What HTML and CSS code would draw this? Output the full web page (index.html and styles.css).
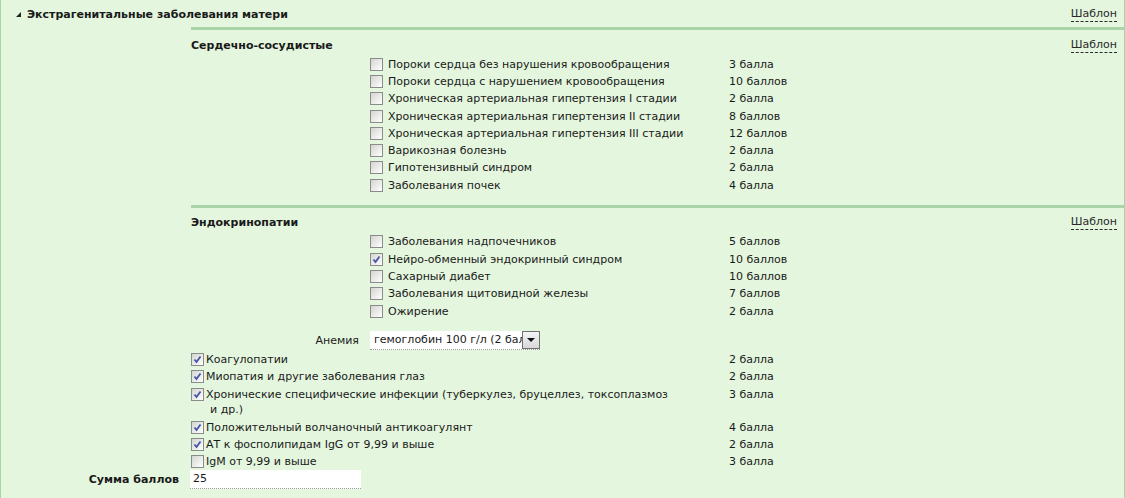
FILE: index.html
```html
<!DOCTYPE html>
<html lang="ru">
<head>
<meta charset="utf-8">
<title>Экстрагенитальные заболевания матери</title>
<link rel="stylesheet" href="styles.css">
</head>
<body>
<div class="panel">
  <div class="panel-head">
    <span class="tri"></span>
    <span class="panel-title">Экстрагенитальные заболевания матери</span>
    <a class="tpl">Шаблон</a>
  </div>

  <section class="group group-first">
    <div class="group-head"><span class="group-title">Сердечно-сосудистые</span><a class="tpl">Шаблон</a></div>
    <ul class="items">
      <li><span class="cb"></span><span class="lbl">Пороки сердца без нарушения кровообращения</span><span class="pts">3 балла</span></li>
      <li><span class="cb"></span><span class="lbl">Пороки сердца с нарушением кровообращения</span><span class="pts">10 баллов</span></li>
      <li><span class="cb"></span><span class="lbl">Хроническая артериальная гипертензия I стадии</span><span class="pts">2 балла</span></li>
      <li><span class="cb"></span><span class="lbl">Хроническая артериальная гипертензия II стадии</span><span class="pts">8 баллов</span></li>
      <li><span class="cb"></span><span class="lbl">Хроническая артериальная гипертензия III стадии</span><span class="pts">12 баллов</span></li>
      <li><span class="cb"></span><span class="lbl">Варикозная болезнь</span><span class="pts">2 балла</span></li>
      <li><span class="cb"></span><span class="lbl">Гипотензивный синдром</span><span class="pts">2 балла</span></li>
      <li><span class="cb"></span><span class="lbl">Заболевания почек</span><span class="pts">4 балла</span></li>
    </ul>
  </section>

  <section class="group group-second">
    <div class="group-head"><span class="group-title">Эндокринопатии</span><a class="tpl">Шаблон</a></div>
    <ul class="items">
      <li><span class="cb"></span><span class="lbl">Заболевания надпочечников</span><span class="pts">5 баллов</span></li>
      <li><span class="cb checked"><svg viewBox="0 0 11 11" width="11" height="11"><path d="M2.5 5.5 L4.5 8 L8.5 2.5" fill="none" stroke="#4455aa" stroke-width="1.8"/></svg></span><span class="lbl">Нейро-обменный эндокринный синдром</span><span class="pts">10 баллов</span></li>
      <li><span class="cb"></span><span class="lbl">Сахарный диабет</span><span class="pts">10 баллов</span></li>
      <li><span class="cb"></span><span class="lbl">Заболевания щитовидной железы</span><span class="pts">7 баллов</span></li>
      <li><span class="cb"></span><span class="lbl">Ожирение</span><span class="pts">2 балла</span></li>
    </ul>
  </section>

  <div class="anemia-row">
    <span class="field-label">Анемия</span>
    <div class="select">
      <span class="select-text">гемоглобин 100 г/л (2 балла)</span>
      <span class="select-btn"><span class="arrow"></span></span>
    </div>
  </div>

  <ul class="items-wide">
    <li><span class="cb checked"><svg viewBox="0 0 11 11" width="11" height="11"><path d="M2.5 5.5 L4.5 8 L8.5 2.5" fill="none" stroke="#4455aa" stroke-width="1.8"/></svg></span><span class="lbl">Коагулопатии</span><span class="pts">2 балла</span></li>
    <li><span class="cb checked"><svg viewBox="0 0 11 11" width="11" height="11"><path d="M2.5 5.5 L4.5 8 L8.5 2.5" fill="none" stroke="#4455aa" stroke-width="1.8"/></svg></span><span class="lbl">Миопатия и другие заболевания глаз</span><span class="pts">2 балла</span></li>
    <li class="two-line"><span class="cb checked"><svg viewBox="0 0 11 11" width="11" height="11"><path d="M2.5 5.5 L4.5 8 L8.5 2.5" fill="none" stroke="#4455aa" stroke-width="1.8"/></svg></span><span class="lbl">Хронические специфические инфекции (туберкулез, бруцеллез, токсоплазмоз и&nbsp;др.)</span><span class="pts">3 балла</span></li>
    <li><span class="cb checked"><svg viewBox="0 0 11 11" width="11" height="11"><path d="M2.5 5.5 L4.5 8 L8.5 2.5" fill="none" stroke="#4455aa" stroke-width="1.8"/></svg></span><span class="lbl">Положительный волчаночный антикоагулянт</span><span class="pts">4 балла</span></li>
    <li><span class="cb checked"><svg viewBox="0 0 11 11" width="11" height="11"><path d="M2.5 5.5 L4.5 8 L8.5 2.5" fill="none" stroke="#4455aa" stroke-width="1.8"/></svg></span><span class="lbl">АТ к фосполипидам IgG от 9,99 и выше</span><span class="pts">2 балла</span></li>
    <li><span class="cb"></span><span class="lbl">IgM от 9,99 и выше</span><span class="pts">3 балла</span></li>
  </ul>

  <div class="sum-row">
    <span class="sum-label">Сумма баллов</span>
    <div class="sum-input">25</div>
  </div>
</div>
</body>
</html>
```

FILE: styles.css
```css
* { box-sizing: border-box; }

html, body {
  margin: 0;
  padding: 0;
  background: #e4f6de;
}

body {
  font-family: "DejaVu Sans", Verdana, sans-serif;
  font-size: 11px;
  color: #1a1a1a;
}

.panel {
  min-height: 498px;
  background: #e4f6de;
  border-left: 1px solid #a6d6a6;
  border-right: 1px solid #a6d6a6;
  padding-right: 7px;
}

.panel-head {
  display: flex;
  align-items: center;
  height: 27px;
  padding-top: 1px;
  padding-left: 15px;
}

.tri {
  width: 0;
  height: 0;
  border-left: 5px solid transparent;
  border-bottom: 5px solid #222;
  margin-right: 6px;
  margin-top: 1px;
}

.panel-title {
  font-weight: bold;
  flex: 1;
}

.tpl {
  color: #2a2a2a;
  text-decoration: none;
  border-bottom: 1px dashed #2a2a2a;
  line-height: 14px;
  cursor: pointer;
}

.group {
  margin-left: 190px;
  margin-right: -7px;
  padding-right: 7px;
  border-top: 3px solid #a8d4a8;
}

.group-first { margin-bottom: 11.1px; }

.group-head {
  display: flex;
  align-items: center;
  justify-content: space-between;
  height: 17px;
}

.group-first .group-head { margin-top: 7px; }
.group-first .items { margin-top: 1.5px; }
.group-second .group-head { margin-top: 6px; }
.group-second .items { margin-top: 2.35px; }

.group-title { font-weight: bold; }

.items, .items-wide {
  list-style: none;
  margin: 0;
  padding: 0;
}

.items { margin-left: 179px; }

.items li {
  display: grid;
  grid-template-columns: 18px 341px auto;
  align-items: center;
  height: 17.3px;
}

.cb {
  width: 13px;
  height: 13px;
  border: 1px solid #8a8c8c;
  background: linear-gradient(135deg, #d4d4d0 0%, #f2f2f0 70%, #ffffff 100%);
  display: flex;
  align-items: center;
  justify-content: center;
}

.cb svg { display: block; }

.pts { white-space: nowrap; }

.anemia-row {
  display: grid;
  grid-template-columns: 168px 170px;
  column-gap: 11px;
  align-items: center;
  margin-left: 190px;
  margin-top: 11px;
  height: 19px;
}

.field-label { text-align: right; }

.select {
  display: flex;
  align-items: center;
  height: 19px;
  background: #fff;
  border-bottom: 1px dotted #9a9a9a;
  padding-left: 4px;
}

.select-text {
  flex: 1;
  overflow: hidden;
  white-space: nowrap;
}

.select-btn {
  width: 18px;
  height: 18px;
  border: 1px solid #6f6f6f;
  background: linear-gradient(#f4f4f4, #d8d8d8);
  display: flex;
  align-items: center;
  justify-content: center;
}

.arrow {
  width: 0;
  height: 0;
  border-left: 4px solid transparent;
  border-right: 4px solid transparent;
  border-top: 4px solid #111;
}

.items-wide {
  margin-left: 190px;
  margin-top: 1px;
}

.items-wide li {
  display: grid;
  grid-template-columns: 15px 523px auto;
  align-items: start;
  line-height: 15px;
  padding: 1px 0;
}

.items-wide li.two-line { padding: 2.5px 0 1.5px; }

.items-wide .cb { margin-top: 1px; }

.items-wide .lbl {
  padding-left: 4px;
  text-indent: -4px;
  padding-right: 60px;
}

.sum-row {
  display: grid;
  grid-template-columns: 178px 171px;
  column-gap: 11px;
  align-items: center;
  height: 19px;
}

.sum-label {
  font-weight: bold;
  text-align: right;
}

.sum-input {
  height: 19px;
  background: #fff;
  border-bottom: 1px dotted #9a9a9a;
  padding-left: 3px;
  line-height: 18px;
}
```
